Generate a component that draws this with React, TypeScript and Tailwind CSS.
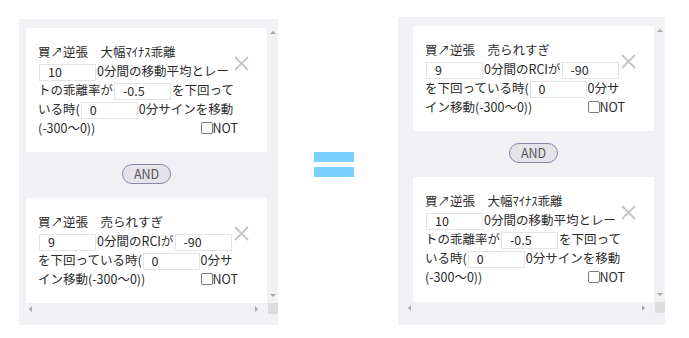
import type { ReactNode } from 'react';

const font = "font-['Noto_Sans_CJK_JP','Noto_Sans',sans-serif]";

function Field({ value }: { value: string }) {
  return (
    <input
      readOnly
      value={value}
      className={`${font} inline-block align-middle w-[57px] h-[17px] mx-[1px] pl-[8px] border border-[#e4e4e4] bg-white text-[12.5px] text-[#2b2b2b] outline-none`}
    />
  );
}

function NotBox() {
  return (
    <label className="float-right flex items-center h-[18.5px]">
      <span className="w-[12px] h-[12px] border border-[#7a7a7a] rounded-[2px] bg-white" />
      <span className="text-[12.5px] leading-none">NOT</span>
    </label>
  );
}

function CloseX() {
  return (
    <svg width="15" height="15" viewBox="0 0 15 15" className="absolute top-[28px] right-[18px]">
      <path d="M1 1 L14 14 M14 1 L1 14" stroke="#c6c6c6" strokeWidth="1.8" fill="none" />
    </svg>
  );
}

function Card({ children }: { children: ReactNode }) {
  return (
    <div className="relative w-[241px] bg-white rounded-[2px] pl-3 py-[15px]">
      <div className={`${font} w-[200px] text-[12.5px] leading-[18.5px] text-[#2b2b2b]`}>{children}</div>
      <CloseX />
    </div>
  );
}

function AndPill() {
  return (
    <div className="w-[241px] flex justify-center">
      <div
        className={`${font} w-[49px] h-[20px] rounded-full border border-[#8c84a8] bg-[#e4e3ea] flex items-center justify-center text-[12.5px] text-[#555]`}
      >
        AND
      </div>
    </div>
  );
}

// 折り返し位置ごとに span を分けておく
function MovingAvgCard() {
  return (
    <Card>
      <div>買↗逆張　大幅ﾏｲﾅｽ乖離</div>
      <div>
        <Field value="10" />
        <span>0分間の移動平均とレー</span>
        <span>トの乖離率が</span>
        <Field value="-0.5" />
        <span>を下回って</span>
        <span>いる時(</span>
        <Field value="0" />
        <span>0分サインを移動</span>
        <span>(-300～0))</span>
        <NotBox />
      </div>
    </Card>
  );
}

function RciCard() {
  return (
    <Card>
      <div>買↗逆張　売られすぎ</div>
      <div>
        <Field value="9" />
        <span>0分間のRCIが</span>
        <Field value="-90" />
        <span>を下回っている時(</span>
        <Field value="0" />
        <span>0分サ</span>
        <span>イン移動(-300～0))</span>
        <NotBox />
      </div>
    </Card>
  );
}

// 擬似スクロールバー（古いChrome風の小さな矢印）
function Arrow({ dir }: { dir: 'up' | 'down' | 'left' | 'right' }) {
  const cls = {
    up: 'border-x-[3px] border-x-transparent border-b-[3px] border-b-[#a6a6a6]',
    down: 'border-x-[3px] border-x-transparent border-t-[3px] border-t-[#a6a6a6]',
    left: 'border-y-[3px] border-y-transparent border-r-[3px] border-r-[#a6a6a6]',
    right: 'border-y-[3px] border-y-transparent border-l-[3px] border-l-[#a6a6a6]',
  }[dir];
  return <span className={`w-0 h-0 ${cls}`} />;
}

function Panel({
  width,
  height,
  padLeft,
  viewHeight,
  children,
}: {
  width: string;
  height: string;
  padLeft: string;
  viewHeight: string;
  children: ReactNode;
}) {
  return (
    <div className={`${width} ${height} bg-[#f1f0f5] flex flex-col`}>
      <div className={`flex ${viewHeight}`}>
        <div className={`flex-1 overflow-hidden pt-[9px] ${padLeft} flex flex-col gap-[12px]`}>{children}</div>
        <div className="w-[10px] flex flex-col items-center justify-between pt-[12px] pb-[6px]">
          <Arrow dir="up" />
          <Arrow dir="down" />
        </div>
      </div>
      <div className="flex h-[11px]">
        <div className="flex-1 flex items-center justify-between px-[10px]">
          <Arrow dir="left" />
          <Arrow dir="right" />
        </div>
        <div className="w-[10px] bg-[#dcdcdc]" />
      </div>
    </div>
  );
}

export default function App() {
  return (
    <div className="w-[689px] h-[338px] bg-white flex items-start">
      <div className="ml-[19px] mt-[19px]">
        <Panel width="w-[259px]" height="h-[306px]" padLeft="pl-[7px]" viewHeight="h-[284px]">
          <MovingAvgCard />
          <AndPill />
          <div className="mt-[2px]">
            <RciCard />
          </div>
        </Panel>
      </div>

      <div className="ml-[36px] mt-[152px] flex flex-col gap-[5px]">
        <div className="w-[40px] h-[10px] bg-[#7bd0ff]" />
        <div className="w-[40px] h-[10px] bg-[#7bd0ff]" />
      </div>

      <div className="ml-[44px] mt-[17px]">
        <Panel width="w-[267px]" height="h-[308px]" padLeft="pl-[15px]" viewHeight="h-[285px]">
          <RciCard />
          <AndPill />
          <div className="mt-[2px]">
            <MovingAvgCard />
          </div>
        </Panel>
      </div>
    </div>
  );
}
